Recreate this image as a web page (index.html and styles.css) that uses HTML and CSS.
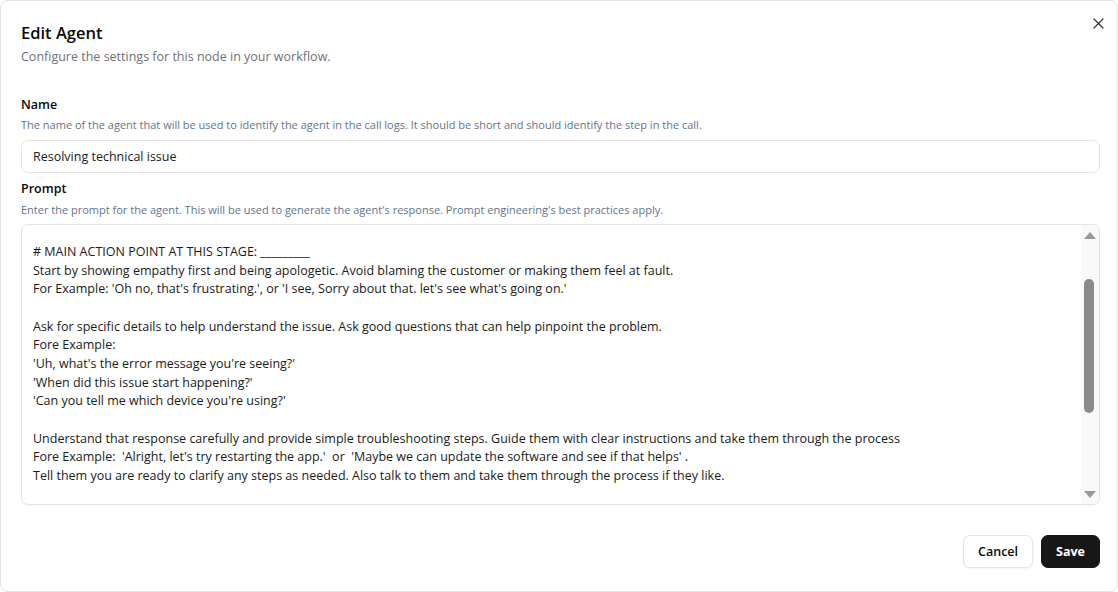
FILE: index.html
```html
<!DOCTYPE html>
<html>
<head>
  <link rel="stylesheet" href="styles.css">
</head>
<body>
  <div class="dialog">
    <div class="dialog-header">
      <h2 class="dialog-title">Edit Agent</h2>
      <p class="dialog-desc">Configure the settings for this node in your workflow.</p>
      <button class="close-btn" aria-label="Close">
        <svg width="11" height="11" viewBox="0 0 11 11" fill="none" stroke="#333" stroke-width="1.2" stroke-linecap="round">
          <path d="M1 1l9 9M10 1l-9 9"/>
        </svg>
      </button>
    </div>

    <div class="field">
      <label class="field-label">Name</label>
      <p class="field-help">The name of the agent that will be used to identify the agent in the call logs. It should be short and should identify the step in the call.</p>
      <div class="input">Resolving technical issue</div>
    </div>

    <div class="field">
      <label class="field-label">Prompt</label>
      <p class="field-help field-help-prompt">Enter the prompt for the agent. This will be used to generate the agent's response. Prompt engineering's best practices apply.</p>
      <div class="textarea">
        <div class="textarea-content">
          <div class="line"># MAIN ACTION POINT AT THIS STAGE: _________</div>
          <div class="line">Start by showing empathy first and being apologetic. Avoid blaming the customer or making them feel at fault.</div>
          <div class="line">For Example: 'Oh no, that's frustrating.', or 'I see, Sorry about that. let's see what's going on.'</div>
          <div class="line"></div>
          <div class="line">Ask for specific details to help understand the issue. Ask good questions that can help pinpoint the problem.</div>
          <div class="line">Fore Example:</div>
          <div class="line">'Uh, what's the error message you're seeing?'</div>
          <div class="line">'When did this issue start happening?'</div>
          <div class="line">'Can you tell me which device you're using?'</div>
          <div class="line"></div>
          <div class="line">Understand that response carefully and provide simple troubleshooting steps. Guide them with clear instructions and take them through the process</div>
          <div class="line">Fore Example:  'Alright, let's try restarting the app.'  or  'Maybe we can update the software and see if that helps' .</div>
          <div class="line">Tell them you are ready to clarify any steps as needed. Also talk to them and take them through the process if they like.</div>
        </div>
        <div class="scrollbar">
          <span class="arrow arrow-up"></span>
          <div class="track"><div class="thumb"></div></div>
          <span class="arrow arrow-down"></span>
        </div>
      </div>
    </div>

    <div class="dialog-footer">
      <button class="btn btn-outline">Cancel</button>
      <button class="btn btn-primary">Save</button>
    </div>
  </div>
</body>
</html>
```

FILE: styles.css
```css
* {
  box-sizing: border-box;
}

body {
  margin: 0;
  padding: 0;
  background-color: #fff;
  font-family: 'Open Sans', 'Noto Sans', sans-serif;
  color: #0a0a0a;
}

.dialog {
  position: relative;
  width: 1118px;
  height: 592px;
  border: 1px solid #e4e4e7;
  border-radius: 8px;
  padding: 20px 17px 0 20px;
  display: flex;
  flex-direction: column;
}

.dialog-header {
  margin-bottom: 30px;
}

.dialog-title {
  margin: 0;
  font-size: 16.5px;
  font-weight: 600;
  line-height: 24px;
  color: #0a0a0a;
}

.dialog-desc {
  margin: 3px 0 0;
  font-size: 12.5px;
  line-height: 18px;
  color: #71717a;
}

.close-btn {
  position: absolute;
  top: 17px;
  right: 13px;
  width: 11px;
  height: 11px;
  padding: 0;
  border: none;
  background: none;
  display: flex;
}

.field {
  display: flex;
  flex-direction: column;
}

.field-label {
  font-size: 12.5px;
  font-weight: 600;
  line-height: 18px;
  color: #0a0a0a;
}

.field-help {
  margin: 4px 0 8px;
  font-size: 11px;
  line-height: 14px;
  color: #64748b;
}

.field-help-prompt {
  margin: 5px 0 7px;
}

.input {
  height: 33px;
  border: 1px solid #e4e4e7;
  border-radius: 7px;
  padding: 0 11px;
  font-size: 12.5px;
  display: flex;
  align-items: center;
  color: #1a1a1a;
  margin-bottom: 7px;
}

.textarea {
  height: 281px;
  border: 1px solid #e4e4e7;
  border-radius: 7px;
  display: flex;
  overflow: hidden;
  box-shadow: 0 1px 2px rgba(0, 0, 0, 0.04);
}

.textarea-content {
  flex: 1;
  padding: 18px 11px 0;
  font-size: 12.5px;
  line-height: 18.67px;
  color: #1a1a1a;
  overflow: hidden;
}

.line {
  white-space: pre;
  min-height: 18.67px;
}

.scrollbar {
  width: 18px;
  background-color: #f9f9f9;
  display: flex;
  flex-direction: column;
  align-items: center;
  padding: 7px 0 6px;
}

.arrow {
  width: 0;
  height: 0;
  border-left: 6px solid transparent;
  border-right: 6px solid transparent;
}

.arrow-up {
  border-bottom: 7px solid #9a9a9a;
}

.arrow-down {
  border-top: 7px solid #9a9a9a;
}

.track {
  flex: 1;
  width: 100%;
  padding: 40px 0 0 3px;
}

.thumb {
  width: 10px;
  height: 134px;
  background-color: #8a8a8a;
  border-radius: 5px;
}

.dialog-footer {
  display: flex;
  justify-content: flex-end;
  gap: 8px;
  margin-top: 30px;
}

.btn {
  height: 33px;
  border-radius: 7px;
  padding: 0 14px;
  font-family: 'Open Sans', 'Noto Sans', sans-serif;
  font-size: 12.5px;
  font-weight: 600;
  cursor: pointer;
}

.btn-outline {
  background-color: #fff;
  color: #0a0a0a;
  border: 1px solid #e4e4e7;
  box-shadow: 0 1px 2px rgba(0, 0, 0, 0.05);
}

.btn-primary {
  background-color: #171717;
  color: #fff;
  border: 1px solid #171717;
  font-weight: 700;
}
```
